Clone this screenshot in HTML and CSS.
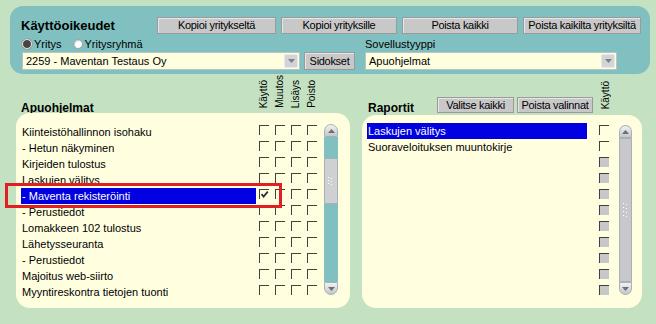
FILE: index.html
```html
<!DOCTYPE html>
<html lang="fi">
<head>
<meta charset="utf-8">
<title>Käyttöoikeudet</title>
<link rel="stylesheet" href="styles.css">
</head>
<body>
<div class="page">
  <section class="header">
    <div class="hrow">
      <h1 class="title">Käyttöoikeudet</h1>
      <div class="actions">
        <button class="btn b1">Kopioi yritykseltä</button>
        <button class="btn b2">Kopioi yrityksille</button>
        <button class="btn b2">Poista kaikki</button>
        <button class="btn b1">Poista kaikilta yrityksiltä</button>
      </div>
    </div>
    <div class="hgrid">
      <div class="radios">
        <span class="radio on"></span><span class="rtext">Yritys</span>
        <span class="radio"></span><span class="rtext">Yritysryhmä</span>
      </div>
      <div></div>
      <div class="lbl">Sovellustyyppi</div>
      <div class="select">
        <span class="stext">2259 - Maventan Testaus Oy</span>
        <span class="arrow"><svg width="7" height="4" viewBox="0 0 7 4"><path d="M0 0H7L3.5 4Z" fill="#7a8088"/></svg></span>
      </div>
      <button class="btn sid">Sidokset</button>
      <div class="select s2">
        <span class="stext">Apuohjelmat</span>
        <span class="arrow"><svg width="7" height="4" viewBox="0 0 7 4"><path d="M0 0H7L3.5 4Z" fill="#7a8088"/></svg></span>
      </div>
    </div>
  </section>

  <div class="lists">
    <section class="col left">
      <div class="colhead">
        <div class="hlabel">Apuohjelmat</div>
        <div class="vh">Käyttö</div>
        <div class="vh">Muutos</div>
        <div class="vh">Lisäys</div>
        <div class="vh">Poisto</div>
      </div>
      <div class="panel">
        <div class="rows">
          <div class="row"><div class="name">Kiinteistöhallinnon isohaku</div><div class="cell"><span class="cb"></span></div><div class="cell"><span class="cb"></span></div><div class="cell"><span class="cb"></span></div><div class="cell"><span class="cb"></span></div></div>
          <div class="row"><div class="name">- Hetun näkyminen</div><div class="cell"><span class="cb"></span></div><div class="cell"><span class="cb"></span></div><div class="cell"><span class="cb"></span></div><div class="cell"><span class="cb"></span></div></div>
          <div class="row"><div class="name">Kirjeiden tulostus</div><div class="cell"><span class="cb"></span></div><div class="cell"><span class="cb"></span></div><div class="cell"><span class="cb"></span></div><div class="cell"><span class="cb"></span></div></div>
          <div class="row"><div class="name">Laskujen välitys</div><div class="cell"><span class="cb"></span></div><div class="cell"><span class="cb"></span></div><div class="cell"><span class="cb"></span></div><div class="cell"><span class="cb"></span></div></div>
          <div class="row sel"><div class="name">- Maventa rekisteröinti</div><div class="cell"><span class="cb"><svg width="9" height="9" viewBox="0 0 9 9"><path d="M1.5 4.2L3.6 6.6L7.8 1.6" fill="none" stroke="#303030" stroke-width="1.8"/></svg></span></div><div class="cell"><span class="cb"></span></div><div class="cell"><span class="cb"></span></div><div class="cell"><span class="cb"></span></div></div>
          <div class="row"><div class="name">- Perustiedot</div><div class="cell"><span class="cb"></span></div><div class="cell"><span class="cb"></span></div><div class="cell"><span class="cb"></span></div><div class="cell"><span class="cb"></span></div></div>
          <div class="row"><div class="name">Lomakkeen 102 tulostus</div><div class="cell"><span class="cb"></span></div><div class="cell"><span class="cb"></span></div><div class="cell"><span class="cb"></span></div><div class="cell"><span class="cb"></span></div></div>
          <div class="row"><div class="name">Lähetysseuranta</div><div class="cell"><span class="cb"></span></div><div class="cell"><span class="cb"></span></div><div class="cell"><span class="cb"></span></div><div class="cell"><span class="cb"></span></div></div>
          <div class="row"><div class="name">- Perustiedot</div><div class="cell"><span class="cb"></span></div><div class="cell"><span class="cb"></span></div><div class="cell"><span class="cb"></span></div><div class="cell"><span class="cb"></span></div></div>
          <div class="row"><div class="name">Majoitus web-siirto</div><div class="cell"><span class="cb"></span></div><div class="cell"><span class="cb"></span></div><div class="cell"><span class="cb"></span></div><div class="cell"><span class="cb"></span></div></div>
          <div class="row"><div class="name">Myyntireskontra tietojen tuonti</div><div class="cell"><span class="cb"></span></div><div class="cell"><span class="cb"></span></div><div class="cell"><span class="cb"></span></div><div class="cell"><span class="cb"></span></div></div>
        </div>
        <div class="sb teal">
          <div class="sbtn up"><svg width="7" height="4" viewBox="0 0 7 4"><path d="M0 4H7L3.5 0Z" fill="#6a7078"/></svg></div>
          <div class="track"><div class="thumb t1"><svg width="6" height="8" viewBox="0 0 6 8"><g fill="#fff"><rect x="0" y="0" width="1" height="1"/><rect x="3" y="1" width="1" height="1"/><rect x="0" y="3" width="1" height="1"/><rect x="3" y="4" width="1" height="1"/><rect x="0" y="6" width="1" height="1"/><rect x="3" y="7" width="1" height="1"/></g></svg></div></div>
          <div class="sbtn down"><svg width="7" height="4" viewBox="0 0 7 4"><path d="M0 0H7L3.5 4Z" fill="#6a7078"/></svg></div>
        </div>
      </div>
    </section>

    <section class="col right">
      <div class="colhead">
        <div class="hlabel r">Raportit</div>
        <button class="btn sm w77">Valitse kaikki</button>
        <button class="btn sm w76">Poista valinnat</button>
        <div class="vh rv">Käyttö</div>
      </div>
      <div class="panel">
        <div class="rows">
          <div class="row sel"><div class="name">Laskujen välitys</div><div class="cell"><span class="cb"></span></div></div>
          <div class="row"><div class="name">Suoraveloituksen muuntokirje</div><div class="cell"><span class="cb"></span></div></div>
          <div class="row"><div class="name"></div><div class="cell"><span class="cb dis"></span></div></div>
          <div class="row"><div class="name"></div><div class="cell"><span class="cb dis"></span></div></div>
          <div class="row"><div class="name"></div><div class="cell"><span class="cb dis"></span></div></div>
          <div class="row"><div class="name"></div><div class="cell"><span class="cb dis"></span></div></div>
          <div class="row"><div class="name"></div><div class="cell"><span class="cb dis"></span></div></div>
          <div class="row"><div class="name"></div><div class="cell"><span class="cb dis"></span></div></div>
          <div class="row"><div class="name"></div><div class="cell"><span class="cb dis"></span></div></div>
          <div class="row"><div class="name"></div><div class="cell"><span class="cb dis"></span></div></div>
          <div class="row"><div class="name"></div><div class="cell"><span class="cb dis"></span></div></div>
        </div>
        <div class="sb grey">
          <div class="sbtn up"><svg width="7" height="4" viewBox="0 0 7 4"><path d="M0 4H7L3.5 0Z" fill="#6a7078"/></svg></div>
          <div class="track"><div class="thumb t2"><svg width="6" height="14" viewBox="0 0 6 14"><g fill="#fff"><rect x="0" y="0" width="1" height="1"/><rect x="3" y="1" width="1" height="1"/><rect x="0" y="4" width="1" height="1"/><rect x="3" y="5" width="1" height="1"/><rect x="0" y="8" width="1" height="1"/><rect x="3" y="9" width="1" height="1"/><rect x="0" y="12" width="1" height="1"/><rect x="3" y="13" width="1" height="1"/></g></svg></div></div>
          <div class="sbtn down"><svg width="7" height="4" viewBox="0 0 7 4"><path d="M0 0H7L3.5 4Z" fill="#6a7078"/></svg></div>
        </div>
      </div>
    </section>
  </div>

  <div class="mark"></div>
</div>
</body>
</html>
```
FILE: styles.css
```css
* { box-sizing: border-box; }
html, body { margin: 0; padding: 0; }
body {
  background: #c4e2c2;
  font-family: "Liberation Sans", Arial, sans-serif;
  font-size: 11px;
  color: #000;
  width: 656px;
  height: 324px;
  overflow: hidden;
}
.page { position: relative; padding-top: 6px; height: 324px; }

/* header */
.header {
  margin: 0 6px 0 10px;
  height: 68px;
  background: #80c0c1;
  border-radius: 13px;
  padding: 11px 0 0 11px;
}
.hrow { display: flex; height: 17px; align-items: center; }
.title { margin: 0; width: 136px; font-size: 13px; font-weight: bold; line-height: 17px; }
.actions { display: flex; gap: 5px; }
.btn {
  height: 17px;
  padding: 0;
  margin: 0;
  background: #c8c8c8;
  color: #000;
  border: 1px solid #9a9a9a;
  box-shadow: inset 1px 1px 0 #e6e6e6;
  font-family: "Liberation Sans", Arial, sans-serif;
  font-size: 11px;
  letter-spacing: -0.3px;
  line-height: 15px;
  text-align: center;
  white-space: nowrap;
  overflow: hidden;
}
.b1 { width: 119px; }
.b2 { width: 116px; }
.actions .b1:last-child { width: 118px; }

.hgrid {
  display: grid;
  grid-template-columns: 278px 51px 258px;
  grid-template-rows: 14px 18px;
  column-gap: 4px;
  row-gap: 1px;
  margin: 3px 0 0 1px;
}
.radios { display: flex; align-items: center; }
.radio {
  width: 10px; height: 10px;
  border-radius: 50%;
  background: #fff;
  border: 1px solid #9aa0a6;
  box-shadow: inset 1px 1px 1px #c8c8c8;
}
.radio.on { background: #454545; border-color: #e4e4e4; box-shadow: 0 0 0 1px #9aa0a6; }
.rtext { margin-left: 2px; margin-right: 11px; line-height: 14px; }
.lbl { margin-left: 6px; line-height: 14px; }
.select {
  height: 18px;
  background: #ffffe0;
  border: 1px solid #b8c4c8;
  display: flex;
  align-items: center;
  padding-left: 3px;
}
.select.s2 { margin-left: 6px; }
.stext { flex: 1; white-space: nowrap; }
.arrow {
  width: 14px; height: 14px;
  margin-right: 1px;
  background: #d2d4d6;
  border: 1px solid #e8e8e8;
  border-radius: 2px;
  display: flex; align-items: center; justify-content: center;
}
.btn.sid { height: 18px; }

/* lists */
.lists { display: flex; gap: 12px; margin: 6px 0 0 16px; }
.col.left { width: 334px; }
.col.right { width: 280px; }
.colhead { display: flex; align-items: flex-end; height: 33px; }
.right .colhead { height: 35px; }
.hlabel {
  width: 240px;
  height: 12px;
  overflow: hidden;
  padding-left: 5px;
  font-size: 12px;
  font-weight: bold;
  line-height: 14px;
}
.hlabel.r { width: 75px; height: 14px; padding-left: 6px; }
.vh {
  width: 16px;
  writing-mode: vertical-rl;
  transform: rotate(180deg);
  font-size: 10px;
  line-height: 16px;
  white-space: nowrap;
  margin-bottom: 5px;
}
.vh.rv { margin-left: 5px; margin-bottom: 6px; }
.btn.sm { height: 16px; margin-bottom: 2px; line-height: 14px; }
.w77 { width: 77px; margin-right: 3px; }
.w76 { width: 76px; }

.panel {
  display: flex;
  background: #ffffe0;
  border-radius: 14px;
  height: 195px;
  padding: 11px 0 0 5px;
}
.right .panel { height: 193px; padding-top: 8px; }
.row { display: flex; height: 16px; }
.name { width: 235px; padding-left: 1px; line-height: 16px; white-space: nowrap; overflow: hidden; }
.right .name { width: 220px; }
.row.sel .name { background: #0000e0; color: #fff; }
.cell { width: 16px; padding: 1px 0 0 3px; }
.right .cell { width: 22px; padding: 2px 0 0 12px; }
.cb {
  display: block;
  width: 10px; height: 10px;
  border-top: 1px solid #404040;
  border-left: 1px solid #404040;
}
.cb svg { display: block; }
.cb.dis { background: #c8c8c8; }

/* scrollbars */
.sb { display: flex; flex-direction: column; width: 14px; height: 171px; margin-left: 4px; }
.sb.grey { width: 13px; height: 170px; margin-left: 10px; margin-top: 2px; }
.sbtn {
  height: 13px;
  background: linear-gradient(#f2f2f2, #c4c6c8);
  border: 1px solid #a8b0b8;
  display: flex; align-items: center; justify-content: center;
}
.sbtn.up { border-radius: 7px 7px 1px 1px; }
.sbtn.down { border-radius: 1px 1px 7px 7px; }
.track { flex: 1; display: flex; flex-direction: column; }
.teal .track { background: #80c0c1; }
.thumb {
  background: #cfd0d2;
  outline: 1px solid #a8b0b8;
  outline-offset: -1px;
  display: flex; align-items: center; justify-content: center;
}
.thumb.t1 { margin-top: 21px; height: 46px; border: 1px solid #dcdcdc; }
.thumb.t2 { flex: 1; background: #c8c8cc; border-left: 1px solid #98a4ac; border-right: 1px solid #98a4ac; }

/* annotation overlay */
.mark {
  position: absolute;
  left: 5px; top: 183px;
  width: 277px; height: 25px;
  border: 3px solid #e01f24;
}
```
